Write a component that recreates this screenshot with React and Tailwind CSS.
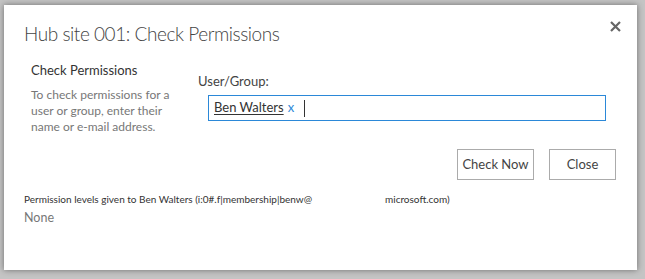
import React from 'react';

const font = { fontFamily: 'Lato, "Open Sans", "Liberation Sans", sans-serif' };

const CloseIcon = () => (
  <svg width="11" height="11" viewBox="0 0 11 11" className="block">
    <path d="M1 1 L10 10 M10 1 L1 10" stroke="#666" strokeWidth="2.2" />
  </svg>
);

export default function App() {
  return (
    <div className="w-[645px] h-[279px] bg-[#c4c4c4] pt-[5px] pl-[4px] overflow-hidden" style={font}>
      <div className="w-[633px] h-[265px] bg-white shadow-[0_0_6px_rgba(0,0,0,0.45)] flex flex-col">
        {/* Header */}
        <div className="flex items-start justify-between pl-[20px] pr-[16px] pt-[16px]">
          <h1 className="text-[19px] font-light leading-[26px] tracking-[-0.45px] text-[#444]">
            Hub site 001: Check Permissions
          </h1>
          <button className="mt-0">
            <CloseIcon />
          </button>
        </div>

        {/* Body */}
        <div className="flex mt-[14px]">
          <div className="w-[194px] pl-[27px] shrink-0">
            <div className="text-[13px] leading-[18px] text-[#333]">Check Permissions</div>
            <p className="mt-[8px] w-[140px] text-[12px] leading-[16px] text-[#777]">
              To check permissions for a user or group, enter their name or e-mail address.
            </p>
          </div>
          <div className="flex-1 pt-[11px]">
            <div className="text-[13px] leading-[18px] text-[#444]">User/Group:</div>
            <div className="ml-[10px] mt-[5px] w-[398px] h-[26px] border border-[#2b88d8] flex items-center pl-[5px] text-[13px] text-[#333]">
              <span className="underline underline-offset-2">Ben Walters</span>
              <span className="ml-[4px] text-[#2b88d8]">x</span>
              <span className="ml-[10px] w-px h-[17px] bg-[#333]"></span>
            </div>
          </div>
        </div>

        {/* Buttons */}
        <div className="flex justify-end gap-[15px] pr-[21px] mt-[14px]">
          <button className="w-[77px] h-[31px] border border-[#ababab] text-[13px] text-[#444] bg-white">
            Check Now
          </button>
          <button className="w-[67px] h-[31px] border border-[#ababab] text-[13px] text-[#444] bg-white">
            Close
          </button>
        </div>

        {/* Result */}
        <div className="pl-[20px] mt-[12px]">
          <div className="flex text-[10px] leading-[14px] text-[#333]">
            <span className="w-[361px]">Permission levels given to Ben Walters (i:0#.f|membership|benw@</span>
            <span>microsoft.com)</span>
          </div>
          <div className="mt-[4px] text-[12.5px] leading-[16px] text-[#777]">None</div>
        </div>
      </div>
    </div>
  );
}
